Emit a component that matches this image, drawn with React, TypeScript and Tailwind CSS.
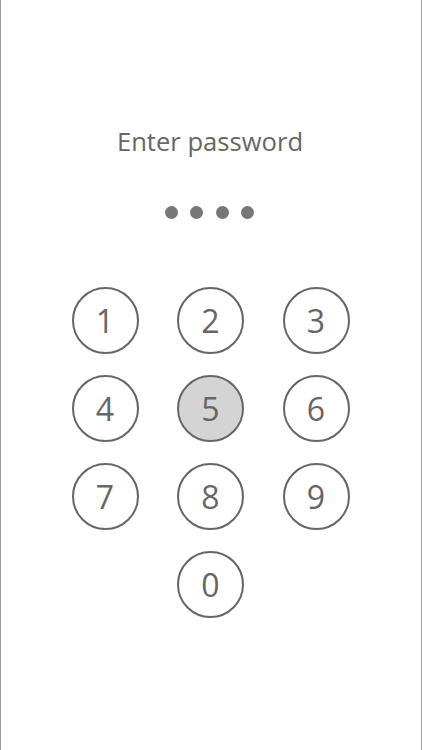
import React from "react";

const keys = ["1", "2", "3", "4", "5", "6", "7", "8", "9"];

function Key({ label, active }: { label: string; active?: boolean }) {
  return (
    <button
      className={`w-[67px] h-[67px] rounded-full border-2 border-[#666666] flex items-center justify-center text-[32px] leading-none text-[#666666] ${
        active ? "bg-[#d4d4d4]" : "bg-white"
      }`}
    >
      {label}
    </button>
  );
}

export default function App() {
  return (
    <div
      className="w-[422px] h-[750px] bg-white border-x border-[#9a9a9a] flex flex-col items-center"
      style={{ fontFamily: '"Open Sans", "Noto Sans", sans-serif' }}
    >
      <h1 className="mt-[124px] text-[25.6px] text-[#666666] leading-9 mr-[2px]">Enter password</h1>

      {/* Dots */}
      <div className="mt-[46px] flex gap-[12.5px] mr-[3px]">
        {[0, 1, 2, 3].map((i) => (
          <span key={i} className="w-[13px] h-[13px] rounded-full bg-[#777777]" />
        ))}
      </div>

      {/* Keypad */}
      <div className="mt-[68px] grid grid-cols-3 gap-x-[38.5px] gap-y-[21px] mr-[1px]">
        {keys.map((k) => (
          <Key key={k} label={k} active={k === "5"} />
        ))}
        <div />
        <Key label="0" />
      </div>
    </div>
  );
}
